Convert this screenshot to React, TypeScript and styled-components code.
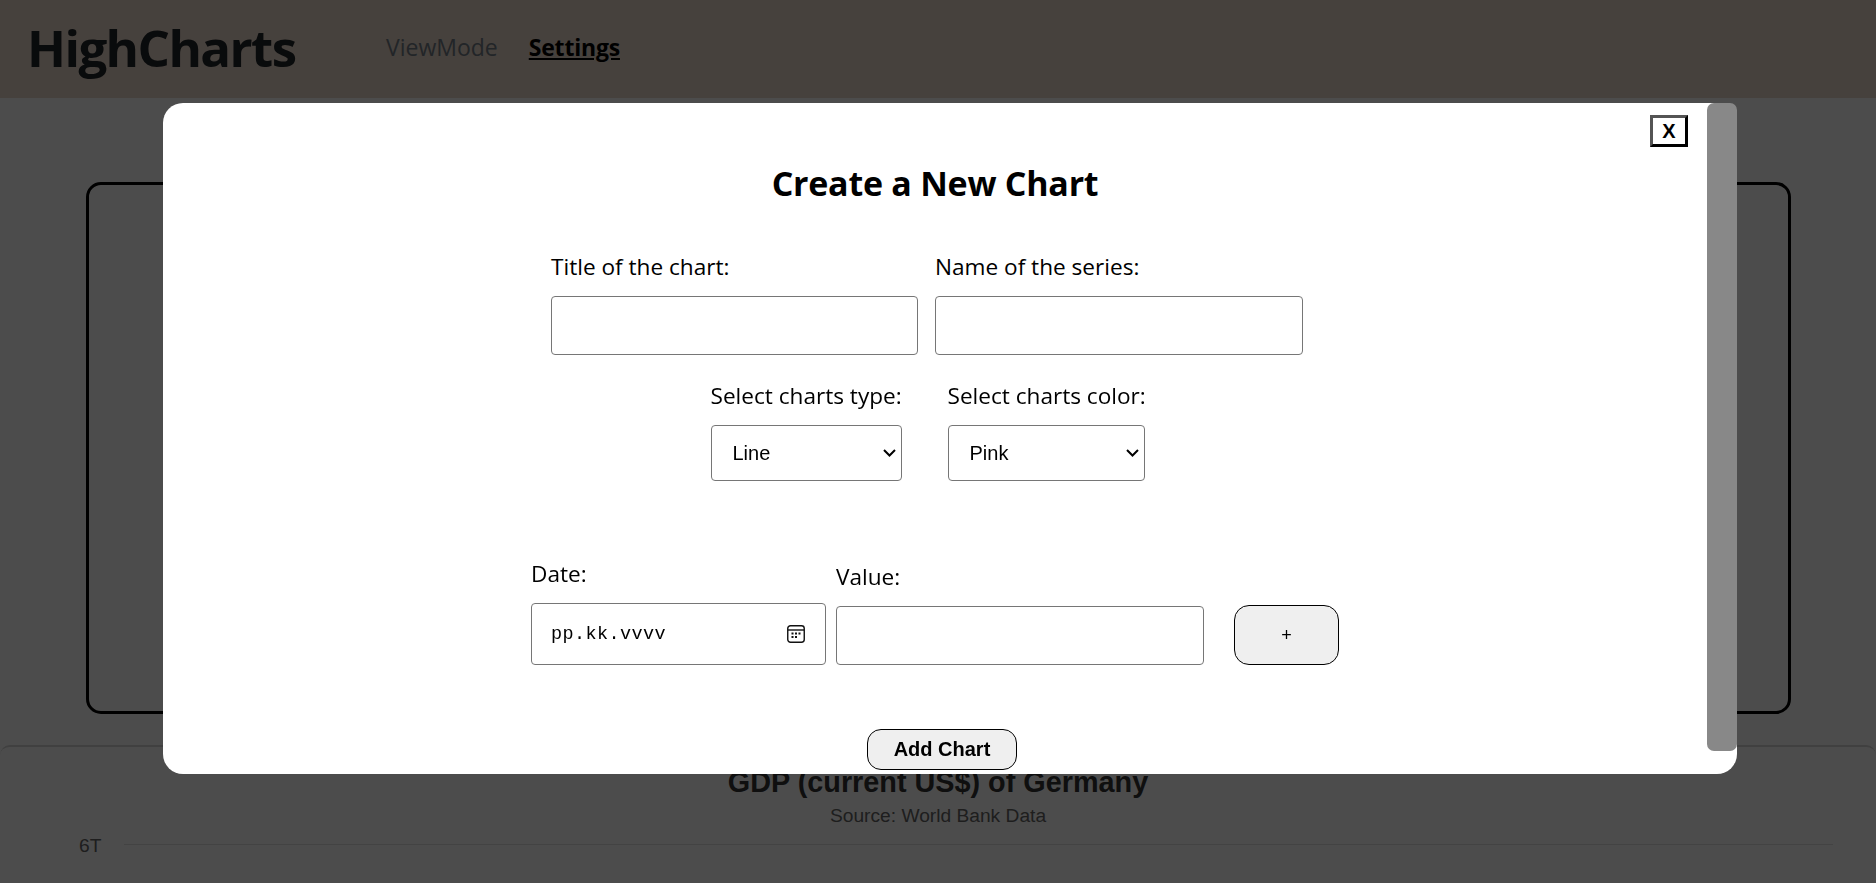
import React from "react";
import styled, { createGlobalStyle } from "styled-components";

const Global = createGlobalStyle`
  html, body { margin: 0; padding: 0; height: 883px; overflow: hidden; background: #fff; }
  body { font-family: "Open Sans", "Noto Sans", sans-serif; color: #000; }
  * { box-sizing: border-box; }
`;

const Page = styled.div`
  height: 883px;
  display: flex;
  flex-direction: column;
  overflow: hidden;
  background: #fff;
`;

const Header = styled.header`
  height: 98px;
  flex: none;
  display: flex;
  align-items: center;
  padding: 0 0 4px 27px;
  background: #ebd9cc;
`;

const Brand = styled.div`
  width: 359px;
  font-size: 51px;
  font-weight: 700;
  letter-spacing: -1.6px;
  color: #212529;
`;

const NavLink = styled.a<{ $active?: boolean }>`
  font-size: 23px;
  margin-right: 31px;
  letter-spacing: ${(p) => (p.$active ? "-0.2px" : "0")};
  font-weight: ${(p) => (p.$active ? 700 : 400)};
  color: ${(p) => (p.$active ? "#000" : "#727c86")};
  text-decoration: ${(p) => (p.$active ? "underline" : "none")};
`;

const ChartCard = styled.section`
  flex: none;
  height: 532px;
  margin: 84px 85px 0 86px;
  border: 3px solid #000;
  border-radius: 15px;
`;

const ChartPanel = styled.section`
  flex: 1;
  margin-top: 31px;
  padding-top: 18px;
  border-top: 2px solid #d5d5d5;
  border-radius: 10px;
  font-family: "Liberation Sans", Arial, sans-serif;
  text-align: center;
`;

const ChartTitle = styled.div`
  font-size: 28.8px;
  line-height: 34px;
  font-weight: 700;
  color: #333;
`;

const ChartSubtitle = styled.div`
  font-size: 19.2px;
  line-height: 22px;
  margin-top: 6px;
  color: #666;
`;

const AxisRow = styled.div`
  display: flex;
  align-items: center;
  margin: 8px 43px 0 79px;
  color: #666;
  font-size: 19.2px;
  line-height: 22px;
`;

const GridLine = styled.div`
  flex: 1;
  height: 1px;
  margin: -4px 0 0 23px;
  background: #e0e0e0;
`;

const Overlay = styled.div`
  position: fixed;
  inset: 0;
  display: flex;
  padding: 103px 139px 109px 163px;
  background: rgba(0, 0, 0, 0.7);
`;

const Modal = styled.div`
  position: relative;
  flex: 1;
  background: #fff;
  border-radius: 20px;
`;

const ScrollThumb = styled.div`
  position: absolute;
  top: 0;
  right: 0;
  width: 30px;
  height: 648px;
  background: #888;
  border-radius: 7px;
`;

const CloseButton = styled.button`
  position: absolute;
  top: 12px;
  right: 49px;
  width: 38px;
  height: 32px;
  padding: 0;
  background: #fff;
  border: 3px outset #000;
  font: 700 20px "Liberation Sans", Arial, sans-serif;
  color: #000;
`;

const Form = styled.form`
  display: flex;
  flex-direction: column;
  padding: 58px 30px 0 0;
`;

const Heading = styled.h2`
  margin: 0 0 48px;
  font-size: 34px;
  line-height: 44px;
  font-weight: 700;
  letter-spacing: -0.25px;
  text-align: center;
`;

const Row = styled.div<{ $gap: number; $shift?: number; $after?: number }>`
  display: flex;
  justify-content: center;
  align-items: flex-end;
  gap: ${(p) => p.$gap}px;
  padding-right: ${(p) => p.$shift ?? 0}px;
  margin-bottom: ${(p) => p.$after ?? 0}px;
`;

const Field = styled.div<{ $width: number }>`
  width: ${(p) => p.$width}px;
  display: flex;
  flex-direction: column;
`;

const Label = styled.label`
  margin-bottom: 16px;
  font-size: 22.6px;
  line-height: 27px;
  white-space: nowrap;
`;

const TextInput = styled.input<{ $height: number }>`
  width: 100%;
  height: ${(p) => p.$height}px;
  border: 1px solid #767676;
  border-radius: 4px;
  background: #fff;
`;

const chevron =
  "data:image/svg+xml,%3Csvg xmlns='http://www.w3.org/2000/svg' width='13' height='8' viewBox='0 0 13 8'%3E%3Cpath d='M1 1l5.5 5.5L12 1' fill='none' stroke='%23000' stroke-width='2'/%3E%3C/svg%3E";

const Select = styled.select`
  width: 100%;
  height: 56px;
  padding-left: 21px;
  appearance: none;
  border: 1px solid #767676;
  border-radius: 4px;
  background: #fff url("${chevron}") no-repeat right 5px center;
  color: #000;
  font: 400 20px "Liberation Sans", Arial, sans-serif;
`;

const DateBox = styled.div`
  height: 62px;
  display: flex;
  align-items: center;
  justify-content: space-between;
  padding: 0 20px 0 19px;
  border: 1px solid #767676;
  border-radius: 4px;
`;

const DateText = styled.span`
  font: 400 18.5px "Liberation Mono", monospace;
  letter-spacing: 0.4px;
`;

const PlusButton = styled.button`
  width: 105px;
  height: 60px;
  margin-left: 20px;
  padding: 0;
  border: 1px solid #000;
  border-radius: 15px;
  background: #efefef;
  color: #000;
  font: 400 18px "Liberation Sans", Arial, sans-serif;
`;

const AddButton = styled.button`
  align-self: center;
  width: 150px;
  height: 41px;
  margin: 64px 0 0 14px;
  padding: 0;
  border: 1px solid #000;
  border-radius: 14px;
  background: #efefef;
  color: #000;
  font: 700 20px "Liberation Sans", Arial, sans-serif;
`;

const CalendarIcon = () => (
  <svg width="18" height="18" viewBox="0 0 18 18" fill="none">
    <rect x="0.75" y="0.75" width="16.5" height="16.5" rx="2.75" stroke="#111" strokeWidth="1.4" />
    <path d="M1 5h16" stroke="#111" strokeWidth="1.4" />
    <path d="M4.5 7.5h2v2h-2zM8 7.5h2v2H8zM11.5 7.5h2v2h-2zM4.5 11h2v2h-2zM8 11h2v2H8z" fill="#111" />
  </svg>
);

export default function App() {
  return (
    <Page>
      <Global />
      <Header>
        <Brand>HighCharts</Brand>
        <NavLink>ViewMode</NavLink>
        <NavLink $active>Settings</NavLink>
      </Header>
      <ChartCard />
      <ChartPanel>
        <ChartTitle>GDP (current US$) of Germany</ChartTitle>
        <ChartSubtitle>Source: World Bank Data</ChartSubtitle>
        <AxisRow>
          6T
          <GridLine />
        </AxisRow>
      </ChartPanel>
      <Overlay>
        <Modal>
          <ScrollThumb />
          <CloseButton type="button">X</CloseButton>
          <Form>
            <Heading>Create a New Chart</Heading>
            <Row $gap={17} $shift={16} $after={27}>
              <Field $width={367}>
                <Label>Title of the chart:</Label>
                <TextInput $height={59} />
              </Field>
              <Field $width={368}>
                <Label>Name of the series:</Label>
                <TextInput $height={59} />
              </Field>
            </Row>
            <Row $gap={46} $shift={15} $after={79}>
              <Field $width={191}>
                <Label>Select charts type:</Label>
                <Select defaultValue="Line">
                  <option>Line</option>
                  <option>Bar</option>
                </Select>
              </Field>
              <Field $width={197}>
                <Label>Select charts color:</Label>
                <Select defaultValue="Pink">
                  <option>Pink</option>
                  <option>Blue</option>
                </Select>
              </Field>
            </Row>
            <Row $gap={10}>
              <Field $width={295}>
                <Label>Date:</Label>
                <DateBox>
                  <DateText>pp.kk.vvvv</DateText>
                  <CalendarIcon />
                </DateBox>
              </Field>
              <Field $width={368}>
                <Label>Value:</Label>
                <TextInput $height={59} />
              </Field>
              <PlusButton type="button">+</PlusButton>
            </Row>
            <AddButton type="button">Add Chart</AddButton>
          </Form>
        </Modal>
      </Overlay>
    </Page>
  );
}
